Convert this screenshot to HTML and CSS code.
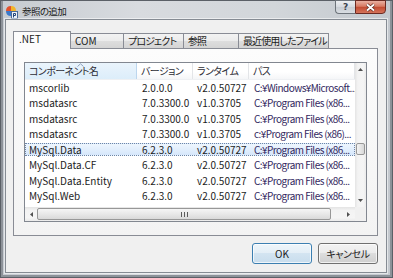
FILE: index.html
```html
<!DOCTYPE html>
<html lang="ja">
<head>
  <meta charset="UTF-8">
  <title>参照の追加</title>
  <link rel="stylesheet" href="styles.css">
</head>
<body>
  <div class="window">
    <div class="titlebar">
      <svg class="app-icon" width="13" height="14" viewBox="0 0 13 14">
        <path d="M1 6 Q1 1 6 1 L6 6 Z" fill="#e2502c"/>
        <path d="M6 1 Q11 1 11 6 L6 6 Z" fill="#f2b52a"/>
        <path d="M1 6 L6 6 L6 11 Q1 11 1 6 Z" fill="#3a78c9"/>
        <path d="M6 6 L11 6 Q11 11 6 11 Z" fill="#5aa33c"/>
        <rect x="6.5" y="6.5" width="6" height="7" fill="#eef3fa" stroke="#4a6a9a" stroke-width="1"/>
        <path d="M8.5 12.5 V8.5 H10.5 V10.5 H8.5" fill="none" stroke="#24467a" stroke-width="1"/>
      </svg>
      <span class="title">参照の追加</span>
    </div>

    <div class="caption">
      <div class="cap-btn help">?</div>
      <div class="cap-btn close">
        <svg width="11" height="9" viewBox="0 0 11 9">
          <path d="M2 1.5 L9 7.5 M9 1.5 L2 7.5" stroke="#5b2a22" stroke-width="3.2"/>
          <path d="M2 1.5 L9 7.5 M9 1.5 L2 7.5" stroke="#ffffff" stroke-width="1.8"/>
        </svg>
      </div>
    </div>

    <div class="client">
      <div class="tabs">
        <div class="tab active w-net">.NET</div>
        <div class="tab w-com">COM</div>
        <div class="tab ja w-proj">プロジェクト</div>
        <div class="tab ja w-ref">参照</div>
        <div class="tab ja w-recent">最近使用したファイル</div>
      </div>

      <div class="panel">
        <div class="listview">
          <div class="lv-main">
            <div class="lv-header">
              <div class="hcell sorted">コンポーネント名
                <svg class="sort-arrow" width="7" height="4" viewBox="0 0 7 4">
                  <path d="M0.5 3.5 L3.5 0.8 L6.5 3.5" fill="none" stroke="#8fa3bd" stroke-width="1"/>
                </svg>
              </div>
              <div class="hcell">バージョン</div>
              <div class="hcell">ランタイム</div>
              <div class="hcell">パス</div>
            </div>
            <div class="lv-rows">
              <div class="row"><div class="cell">mscorlib</div><div class="cell c2">2.0.0.0</div><div class="cell">v2.0.50727</div><div class="cell path">C:¥Windows¥Microsoft...</div></div>
              <div class="row"><div class="cell">msdatasrc</div><div class="cell c2">7.0.3300.0</div><div class="cell">v1.0.3705</div><div class="cell path">C:¥Program Files (x86...</div></div>
              <div class="row"><div class="cell">msdatasrc</div><div class="cell c2">7.0.3300.0</div><div class="cell">v1.0.3705</div><div class="cell path">C:¥Program Files (x86...</div></div>
              <div class="row"><div class="cell">msdatasrc</div><div class="cell c2">7.0.3300.0</div><div class="cell">v1.0.3705</div><div class="cell path">c:¥Program Files (x86)...</div></div>
              <div class="row selected"><div class="cell">MySql.Data</div><div class="cell c2">6.2.3.0</div><div class="cell">v2.0.50727</div><div class="cell path">C:¥Program Files (x86...</div></div>
              <div class="row"><div class="cell">MySql.Data.CF</div><div class="cell c2">6.2.3.0</div><div class="cell">v2.0.50727</div><div class="cell path">C:¥Program Files (x86...</div></div>
              <div class="row"><div class="cell">MySql.Data.Entity</div><div class="cell c2">6.2.3.0</div><div class="cell">v2.0.50727</div><div class="cell path">C:¥Program Files (x86...</div></div>
              <div class="row"><div class="cell">MySql.Web</div><div class="cell c2">6.2.3.0</div><div class="cell">v2.0.50727</div><div class="cell path">C:¥Program Files (x86...</div></div>
            </div>
          </div>

          <div class="vscroll">
            <div class="sb-btn v">
              <svg width="5" height="3" viewBox="0 0 5 3"><path d="M0 3 L2.5 0 L5 3 Z" fill="#505050"/></svg>
            </div>
            <div class="v-track"><div class="v-thumb"></div></div>
            <div class="sb-btn v">
              <svg width="5" height="3" viewBox="0 0 5 3"><path d="M0 0 L2.5 3 L5 0 Z" fill="#505050"/></svg>
            </div>
          </div>

          <div class="hscroll">
            <div class="sb-btn h left">
              <svg width="3" height="5" viewBox="0 0 3 5"><path d="M3 0 L0 2.5 L3 5 Z" fill="#505050"/></svg>
            </div>
            <div class="h-track"><div class="h-thumb"><span class="grip"></span></div></div>
            <div class="sb-btn h right">
              <svg width="3" height="5" viewBox="0 0 3 5"><path d="M0 0 L3 2.5 L0 5 Z" fill="#505050"/></svg>
            </div>
          </div>
          <div class="corner"></div>
        </div>
      </div>

      <div class="buttons">
        <button class="btn default">OK</button>
        <button class="btn ja">キャンセル</button>
      </div>
    </div>
  </div>
</body>
</html>
```

FILE: styles.css
```css
* {
  box-sizing: border-box;
}

body {
  margin: 0;
  font-family: "Noto Sans CJK JP", sans-serif;
  font-size: 10px;
  font-feature-settings: "palt";
  color: #1c1c1c;
}

.window {
  position: relative;
  width: 393px;
  height: 278px;
  border: 1px solid #5b6067;
  padding: 0 5px 4px 4px;
  display: flex;
  flex-direction: column;
  background: linear-gradient(to right, #c6cbd1, #d8dbdf 35%, #d2d6da 70%, #c3c8ce);
  box-shadow: inset 2px 0 0 #8d9299, inset -2px 0 0 #8d9299, inset 0 -2px 0 #8d9299;
}

.titlebar {
  height: 18px;
  display: flex;
  align-items: center;
  gap: 4px;
}

.app-icon {
  margin-top: 4px;
}

.title {
  font-size: 9.5px;
  letter-spacing: -0.6px;
  color: #1a1a1a;
  margin-top: 1px;
}

.caption {
  position: absolute;
  top: -1px;
  right: 6px;
  display: flex;
}

.cap-btn {
  height: 14px;
  display: flex;
  align-items: center;
  justify-content: center;
}

.help {
  width: 20px;
  border: 1px solid #6e747b;
  border-right: none;
  border-radius: 0 0 0 4px;
  background: linear-gradient(#eceef1, #d6dae0 50%, #c7ccd3 50%, #d9dde2);
  color: #3c444e;
  font-family: "DejaVu Sans", sans-serif;
  font-weight: bold;
  font-size: 9px;
  line-height: 12px;
}

.close {
  width: 31px;
  border: 1px solid #6b2a22;
  border-radius: 0 0 4px 0;
  background: linear-gradient(#e9b0a2, #d77a63 45%, #c24a31 50%, #d4735a);
}

.client {
  flex: 1;
  background: #f0f0f0;
  border: 1px solid #858b93;
  box-shadow: 0 0 0 1px rgba(255,255,255,0.55);
  padding: 11px 8px 8px 7px;
  display: flex;
  flex-direction: column;
}

.tabs {
  display: flex;
  align-items: flex-end;
  height: 17px;
}

.tab {
  position: relative;
  height: 15px;
  margin-right: -1px;
  padding-left: 4px;
  line-height: 13px;
  white-space: nowrap;
  overflow: hidden;
  border: 1px solid #898c95;
  border-bottom: none;
  background: linear-gradient(#f3f3f3, #ebebeb 50%, #dedede 50%, #d4d4d4);
  color: #1c1c1c;
}

.tab.ja {
  letter-spacing: -0.9px;
}

.tab.active {
  z-index: 1;
  height: 18px;
  margin-bottom: -1px;
  padding-left: 5px;
  line-height: 14px;
  background: #fcfcfc;
}

.w-net { width: 58px; }
.w-com { width: 54px; }
.w-proj { width: 61px; }
.w-ref { width: 56px; }
.w-recent { width: 91px; }

.panel {
  height: 188px;
  border: 1px solid #898c95;
  background: linear-gradient(#fcfcfc, #f3f3f3);
  padding: 13px 9px 13px 10px;
}

.listview {
  width: 343px;
  height: 160px;
  border: 1px solid #828790;
  background: #fff;
  display: grid;
  grid-template-columns: 330px 11px;
  grid-template-rows: 144px 14px;
}

.lv-main {
  overflow: hidden;
}

.lv-header,
.row {
  display: grid;
  grid-template-columns: 112px 56px 56px 106px;
}

.lv-header {
  height: 17px;
  background: linear-gradient(#ffffff, #ffffff 55%, #f5f6f8);
  border-bottom: 1px solid #eef0f3;
}

.hcell {
  position: relative;
  padding-left: 4px;
  line-height: 16px;
  letter-spacing: -0.6px;
  white-space: nowrap;
  overflow: hidden;
  color: #2d2d35;
  border-right: 1px solid #e3e5e8;
}

.hcell.sorted {
  background: linear-gradient(#eaf4fc, #dcedfa);
  border-right-color: #bcd6ee;
}

.sort-arrow {
  position: absolute;
  left: 52px;
  top: 0;
}

.row {
  position: relative;
  height: 15.43px;
}

.row.selected::before {
  content: "";
  position: absolute;
  left: 0;
  right: 0;
  top: 1px;
  bottom: 1px;
  border: 1px dotted #6f86a6;
  background: linear-gradient(#eef6fe, #d6e7fb);
}

.cell {
  position: relative;
  padding-left: 4px;
  line-height: 15.43px;
  white-space: nowrap;
  overflow: hidden;
}

.cell.c2,
.cell.path {
  padding-left: 5px;
}

.cell.path {
  color: #33285e;
  letter-spacing: -0.55px;
}

.vscroll {
  display: flex;
  flex-direction: column;
  background: linear-gradient(to right, #e4e4e4, #f3f3f3 25%, #f5f5f5 75%, #ebebeb);
}

.sb-btn {
  display: flex;
  align-items: center;
  justify-content: center;
}

.sb-btn.v {
  height: 13px;
}

.v-track {
  flex: 1;
  padding-top: 67px;
}

.v-thumb {
  width: 9px;
  height: 12px;
  margin-left: 1px;
  border: 1px solid #979797;
  border-radius: 2px;
  background: linear-gradient(to right, #f4f4f4, #e6e6e6 50%, #d8d8d8);
}

.hscroll {
  display: flex;
  background: linear-gradient(#e4e4e4, #f3f3f3 25%, #f5f5f5 75%, #ebebeb);
}

.sb-btn.h.left {
  width: 12px;
}

.sb-btn.h.right {
  width: 13px;
}

.h-track {
  flex: 1;
  padding-top: 1px;
}

.h-thumb {
  width: 294px;
  height: 12px;
  border: 1px solid #979797;
  border-radius: 2px;
  background: linear-gradient(#f5f5f5, #e8e8e8 50%, #d9d9d9);
  display: flex;
  align-items: center;
  justify-content: center;
}

.grip {
  width: 7px;
  height: 5px;
  background: repeating-linear-gradient(to right, #5c5c5c 0 1px, transparent 1px 3px);
}

.corner {
  background: #f0f0f0;
}

.buttons {
  display: flex;
  justify-content: flex-end;
  gap: 6px;
  margin-top: 7px;
}

.btn {
  width: 60px;
  height: 21px;
  padding: 0;
  font-family: inherit;
  font-size: 10px;
  font-feature-settings: "palt";
  color: #1c1c1c;
  border: 1px solid #707070;
  border-radius: 3px;
  background: linear-gradient(#f2f2f2, #ebebeb 50%, #dddddd 50%, #cfcfcf);
  box-shadow: inset 0 0 0 1px rgba(255,255,255,0.7);
}

.btn.ja {
  letter-spacing: -0.4px;
}

.btn.default {
  border-color: #3c7fb1;
  background: linear-gradient(#eef5fa, #e3eef6 50%, #d3e4f1 50%, #c8dded);
}
```
